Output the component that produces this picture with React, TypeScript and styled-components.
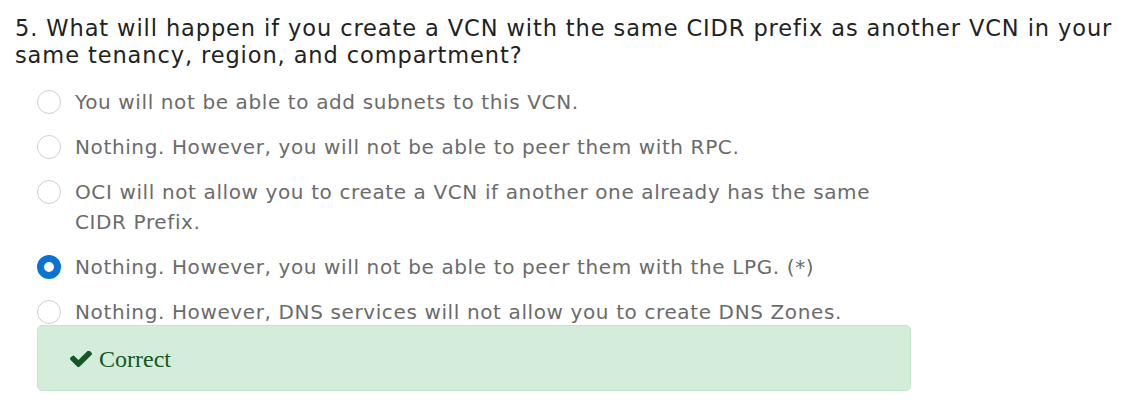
import React from "react";
import styled, { createGlobalStyle } from "styled-components";

const Global = createGlobalStyle`
  html, body { margin: 0; padding: 0; background: #ffffff; }
  body { font-family: "DejaVu Sans", Verdana, sans-serif; }
`;

const Page = styled.div`
  padding: 15px 0 0 15px;
`;

const Question = styled.h2`
  margin: 0;
  font-size: 22.5px;
  line-height: 27px;
  font-weight: 400;
  letter-spacing: 0.9px;
  color: #222222;
`;

const Options = styled.ul`
  list-style: none;
  margin: 18px 0 0 22px;
  padding: 0;
  display: flex;
  flex-direction: column;
  gap: 15px;
  width: 860px;
`;

const Option = styled.li`
  display: flex;
  align-items: flex-start;
  gap: 14px;
`;

const Radio = styled.span<{ $checked?: boolean }>`
  flex: 0 0 auto;
  box-sizing: border-box;
  width: 24px;
  height: 24px;
  margin-top: 3px;
  border-radius: 50%;
  background: #ffffff;
  border: ${(p) => (p.$checked ? "7px solid #0a74d2" : "1px solid #cfcfcf")};
`;

const Label = styled.span`
  font-size: 20px;
  line-height: 30px;
  letter-spacing: 0.62px;
  color: #6b6b6b;
`;

const Feedback = styled.div`
  box-sizing: border-box;
  margin: -2px 0 0 22px;
  width: 874px;
  height: 66px;
  display: flex;
  align-items: center;
  gap: 7px;
  padding: 3px 0 0 32px;
  background: #d4edda;
  border: 1px solid #c3e6cb;
  border-radius: 5px;
  color: #155724;
  font-family: "Liberation Serif", "Times New Roman", serif;
  font-size: 24px;
`;

const CheckIcon = () => (
  <svg width="22" height="17" viewBox="121 420 1550 1110" fill="currentColor" aria-hidden="true">
    <path d="M1671 566q0 40-28 68l-724 724-136 136q-28 28-68 28t-68-28l-136-136-362-362q-28-28-28-68t28-68l136-136q28-28 68-28t68 28l294 295 656-657q28-28 68-28t68 28l136 136q28 28 28 68z" />
  </svg>
);

const options = [
  { text: "You will not be able to add subnets to this VCN." },
  { text: "Nothing. However, you will not be able to peer them with RPC." },
  {
    text: "OCI will not allow you to create a VCN if another one already has the same CIDR Prefix.",
  },
  { text: "Nothing. However, you will not be able to peer them with the LPG. (*)", checked: true },
  { text: "Nothing. However, DNS services will not allow you to create DNS Zones." },
];

export default function App() {
  return (
    <Page>
      <Global />
      <Question>
        5. What will happen if you create a VCN with the same CIDR prefix as another VCN in your
        same tenancy, region, and compartment?
      </Question>
      <Options>
        {options.map((o, i) => (
          <Option key={i}>
            <Radio $checked={o.checked} />
            <Label>{o.text}</Label>
          </Option>
        ))}
      </Options>
      <Feedback>
        <CheckIcon />
        <span>Correct</span>
      </Feedback>
    </Page>
  );
}
